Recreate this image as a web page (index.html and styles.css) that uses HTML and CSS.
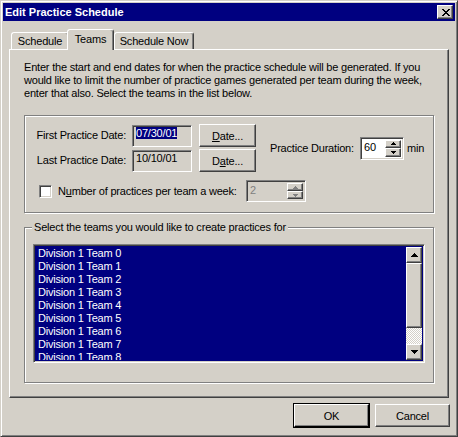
FILE: index.html
```html
<!DOCTYPE html>
<html lang="en">
<head>
    <meta charset="UTF-8">
    <title>Edit Practice Schedule</title>
    <link rel="stylesheet" href="styles.css">
</head>
<body>

    <div class="window">
        <div class="titlebar">
            <span class="title">Edit Practice Schedule</span>
            <button class="close-btn raised">
                <svg width="8" height="7" viewBox="0 0 8 7" shape-rendering="crispEdges">
                    <rect x="0" y="0" width="2" height="1"/><rect x="6" y="0" width="2" height="1"/>
                    <rect x="1" y="1" width="2" height="1"/><rect x="5" y="1" width="2" height="1"/>
                    <rect x="2" y="2" width="4" height="1"/>
                    <rect x="3" y="3" width="2" height="1"/>
                    <rect x="2" y="4" width="4" height="1"/>
                    <rect x="1" y="5" width="2" height="1"/><rect x="5" y="5" width="2" height="1"/>
                    <rect x="0" y="6" width="2" height="1"/><rect x="6" y="6" width="2" height="1"/>
                </svg>
            </button>
        </div>

        <div class="dialog-body">
            <div class="tabs">
                <div class="tab tab-schedule">Schedule</div>
                <div class="tab tab-teams active">Teams</div>
                <div class="tab tab-now">Schedule Now</div>
            </div>

            <div class="panel">
                <p class="intro">Enter the start and end dates for when the practice schedule will be generated. If you would like to limit the number of practice games generated per team during the week, enter that also. Select the teams in the list below.</p>

                <!-- даты и длительность -->
                <div class="group group-dates">
                    <div class="dates-row">
                        <div class="date-grid">
                            <span class="field-label">First Practice Date:</span>
                            <div class="textbox sunken readonly"><span class="selected-text">07/30/01</span></div>
                            <button class="btn raised date-btn"><u>D</u>ate...</button>

                            <span class="field-label">Last Practice Date:</span>
                            <div class="textbox sunken readonly">10/10/01</div>
                            <button class="btn raised date-btn">D<u>a</u>te...</button>
                        </div>

                        <div class="duration">
                            <span class="duration-label">Practice Duration:</span>
                            <div class="spin-box sunken duration-box">
                                <span class="spin-value">60</span>
                                <div class="spin-buttons">
                                    <div class="spin-btn raised">
                                        <svg width="5" height="3" viewBox="0 0 5 3" shape-rendering="crispEdges"><polygon points="2,0 3,0 5,3 0,3"/></svg>
                                    </div>
                                    <div class="spin-btn raised">
                                        <svg width="5" height="3" viewBox="0 0 5 3" shape-rendering="crispEdges"><polygon points="0,0 5,0 3,3 2,3"/></svg>
                                    </div>
                                </div>
                            </div>
                            <span class="unit">min</span>
                        </div>
                    </div>

                    <div class="check-row">
                        <span class="checkbox sunken"></span>
                        <span class="check-label">N<u>u</u>mber of practices per team a week:</span>
                        <div class="spin-box sunken disabled count-box">
                            <span class="spin-value">2</span>
                            <div class="spin-buttons">
                                <div class="spin-btn raised">
                                    <svg width="5" height="3" viewBox="0 0 5 3" shape-rendering="crispEdges"><polygon points="2,0 3,0 5,3 0,3"/></svg>
                                </div>
                                <div class="spin-btn raised">
                                    <svg width="5" height="3" viewBox="0 0 5 3" shape-rendering="crispEdges"><polygon points="0,0 5,0 3,3 2,3"/></svg>
                                </div>
                            </div>
                        </div>
                    </div>
                </div>

                <!-- список команд -->
                <div class="group group-teams">
                    <span class="group-title">Select the teams you would like to create practices for</span>
                    <div class="listbox sunken">
                        <ul class="team-list">
                            <li>Division 1 Team 0</li>
                            <li>Division 1 Team 1</li>
                            <li>Division 1 Team 2</li>
                            <li>Division 1 Team 3</li>
                            <li>Division 1 Team 4</li>
                            <li>Division 1 Team 5</li>
                            <li>Division 1 Team 6</li>
                            <li>Division 1 Team 7</li>
                            <li>Division 1 Team 8</li>
                        </ul>
                        <div class="scrollbar">
                            <div class="scroll-btn raised">
                                <svg width="7" height="4" viewBox="0 0 7 4" shape-rendering="crispEdges"><polygon points="3,0 4,0 7,4 0,4"/></svg>
                            </div>
                            <div class="scroll-thumb raised"></div>
                            <div class="scroll-track"></div>
                            <div class="scroll-btn raised">
                                <svg width="7" height="4" viewBox="0 0 7 4" shape-rendering="crispEdges"><polygon points="0,0 7,0 4,4 3,4"/></svg>
                            </div>
                        </div>
                    </div>
                </div>
            </div>

            <div class="footer">
                <button class="btn raised footer-btn default">OK</button>
                <button class="btn raised footer-btn">Cancel</button>
            </div>
        </div>
    </div>

</body>
</html>
```

FILE: styles.css
```css
body {
    margin: 0;
    background-color: #d4d0c8;
    font-family: 'Liberation Sans', Arial, sans-serif;
    font-size: 11px;
    line-height: 13px;
    letter-spacing: -0.2px;
    color: #000;
}

.window {
    width: 458px;
    height: 437px;
    box-sizing: border-box;
    padding: 2px;
    border: 1px solid;
    border-color: #d4d0c8 #404040 #404040 #d4d0c8;
    box-shadow: inset 1px 1px #fff, inset -1px -1px #808080;
    background-color: #d4d0c8;
}

/* общие рамки */
.raised {
    border: 1px solid;
    border-color: #fff #404040 #404040 #fff;
    box-shadow: inset -1px -1px #808080;
    background-color: #d4d0c8;
    box-sizing: border-box;
}

.sunken {
    border: 1px solid;
    border-color: #808080 #fff #fff #808080;
    box-shadow: inset 1px 1px #404040, inset -1px -1px #d4d0c8;
    box-sizing: border-box;
}

.titlebar {
    height: 18px;
    background-color: #000080;
    color: #fff;
    display: flex;
    align-items: center;
    justify-content: space-between;
    padding: 0 2px;
}

.title {
    font-weight: bold;
    font-size: 11px;
    letter-spacing: 0;
}

.close-btn {
    width: 16px;
    height: 14px;
    padding: 0;
    display: flex;
    align-items: center;
    justify-content: center;
    padding-left: 1px;
}

.close-btn svg {
    fill: #000;
}

.dialog-body {
    padding: 8px 6px 0 6px;
}

.tabs {
    display: flex;
    align-items: flex-end;
    height: 20px;
    padding-left: 2px;
}

.tab {
    height: 17px;
    box-sizing: border-box;
    border: 1px solid;
    border-bottom: none;
    border-color: #fff #404040 transparent #fff;
    box-shadow: inset -1px 0 #808080;
    border-radius: 3px 3px 0 0;
    text-align: center;
    line-height: 16px;
    background-color: #d4d0c8;
}

.tab-schedule {
    width: 58px;
}

.tab-teams {
    width: 47px;
    margin-left: -2px;
}

.tab-now {
    width: 80px;
    margin-left: 0;
}

.tab.active {
    height: 21px;
    margin-bottom: -1px;
    position: relative;
    z-index: 1;
    line-height: 18px;
}

.panel {
    width: 440px;
    height: 349px;
    box-sizing: border-box;
    border: 1px solid;
    border-color: #fff #404040 #404040 #fff;
    box-shadow: inset -1px -1px #808080;
    padding: 11px 0 0 14px;
}

.intro {
    margin: 0;
    width: 412px;
}

.group {
    width: 410px;
    box-sizing: border-box;
    border: 1px solid #808080;
    box-shadow: inset 1px 1px #fff, 1px 1px #fff;
}

.group-dates {
    height: 98px;
    margin-top: 15px;
    padding: 8px 0 0 6px;
}

.dates-row {
    display: flex;
    align-items: center;
}

.date-grid {
    display: grid;
    grid-template-columns: 95px 60px 57px;
    grid-auto-rows: 23px;
    column-gap: 6px;
    row-gap: 2px;
    align-items: center;
}

.field-label {
    text-align: right;
}

.textbox {
    height: 22px;
    padding: 1px 2px 0 3px;
}

.readonly {
    background-color: #d4d0c8;
}

.selected-text {
    background-color: #000080;
    color: #fff;
}

.btn {
    font-family: 'Liberation Sans', Arial, sans-serif;
    font-size: 11px;
    letter-spacing: -0.2px;
    color: #000;
    padding: 0;
    height: 23px;
}

.date-btn {
    width: 57px;
    margin-left: 1px;
}

.duration {
    display: flex;
    align-items: center;
    margin-left: 15px;
}

.duration-label {
    width: 90px;
}

.spin-box {
    display: flex;
    justify-content: space-between;
    height: 23px;
    padding: 2px;
    background-color: #fff;
}

.spin-value {
    padding: 1px 0 0 1px;
}

.spin-buttons {
    display: flex;
    flex-direction: column;
    width: 16px;
}

.spin-btn {
    flex: 1;
    display: flex;
    align-items: center;
    justify-content: center;
}

.spin-btn svg {
    fill: #000;
}

.duration-box {
    width: 44px;
}

.unit {
    margin-left: 3px;
}

.check-row {
    display: flex;
    align-items: center;
    margin-top: 8px;
    padding-left: 8px;
}

.checkbox {
    width: 13px;
    height: 13px;
    background-color: #fff;
}

.check-label {
    width: 188px;
    margin-left: 6px;
}

.count-box {
    width: 60px;
    height: 22px;
}

.disabled {
    background-color: #d4d0c8;
    color: #808080;
}

.disabled .spin-btn svg {
    fill: #808080;
}

.group-teams {
    height: 156px;
    margin-top: 14px;
}

.group-title {
    display: table;
    margin: -7px 0 0 7px;
    padding: 0 2px;
    background-color: #d4d0c8;
}

.listbox {
    width: 392px;
    height: 119px;
    margin: 10px 0 0 8px;
    padding: 2px;
    display: flex;
    background-color: #000080;
}

.team-list {
    flex: 1;
    margin: 0;
    padding: 0;
    list-style: none;
    overflow: hidden;
    color: #fff;
}

.team-list li {
    height: 13px;
    padding-left: 2px;
}

.scrollbar {
    width: 16px;
    display: flex;
    flex-direction: column;
}

.scroll-btn {
    height: 16px;
    display: flex;
    align-items: center;
    justify-content: center;
}

.scroll-thumb {
    height: 65px;
}

.scroll-track {
    flex: 1;
    background-image: conic-gradient(#fff 25%, #d4d0c8 0 50%, #fff 0 75%, #d4d0c8 0);
    background-size: 2px 2px;
}

.footer {
    display: flex;
    justify-content: flex-end;
    gap: 6px;
    margin-top: 6px;
    margin-right: -1px;
}

.footer-btn {
    width: 75px;
}

.footer-btn.default {
    outline: 1px solid #000;
    outline-offset: 0;
    border-color: #fff #000 #000 #fff;
}
```
